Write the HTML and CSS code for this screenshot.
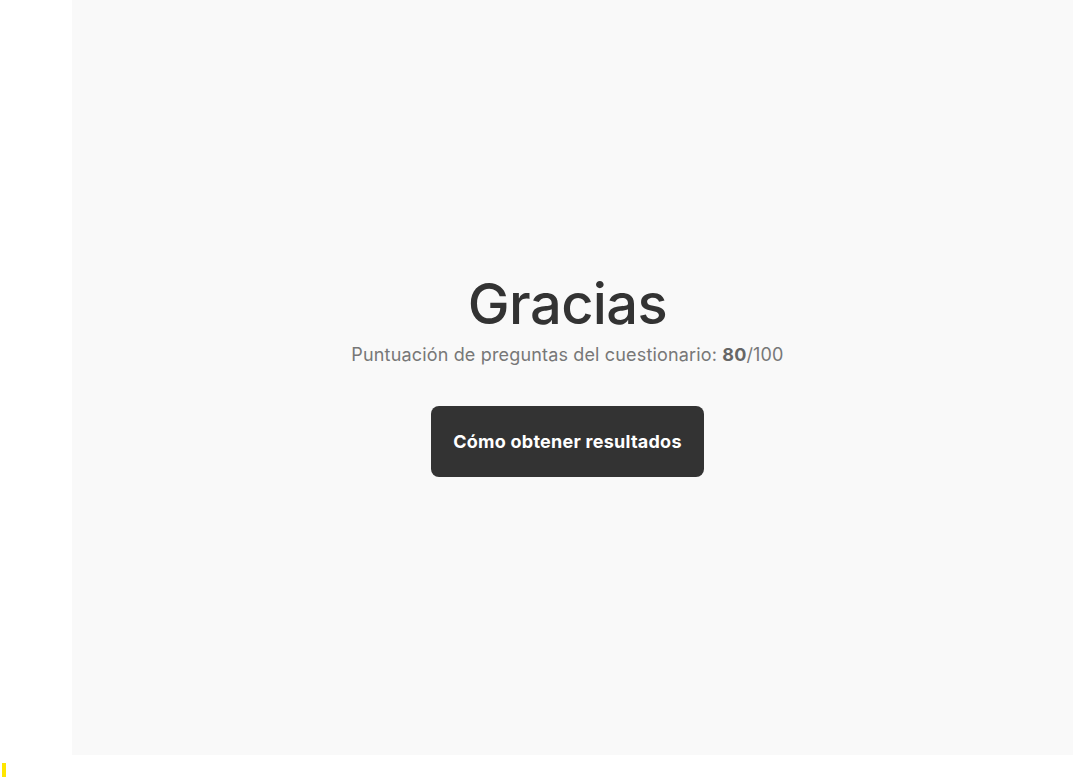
FILE: index.html
```html
<!DOCTYPE html>
<html lang="es">
<head>
<meta charset="utf-8">
<title>Gracias</title>
<link rel="stylesheet" href="styles.css">
</head>
<body>
<div class="layout">
  <aside class="side"></aside>
  <main class="panel">
    <div class="content">
      <h1 class="title">Gracias</h1>
      <p class="score">Puntuación de preguntas del cuestionario: <b>80</b>/100</p>
      <button class="btn">Cómo obtener resultados</button>
    </div>
  </main>
</div>
<div class="footer"><span class="marker"></span></div>
</body>
</html>
```
FILE: styles.css
```css
* { box-sizing: border-box; }
html, body { margin: 0; padding: 0; background: #fff; }
body { font-family: Inter, "Noto Sans", sans-serif; width: 1073px; height: 779px; overflow: hidden; }
.layout { display: flex; height: 755px; }
.side { width: 72px; flex: none; }
.panel { flex: 1; background: #f9f9f9; display: flex; align-items: center; justify-content: center; padding-right: 10px; }
.content { display: flex; flex-direction: column; align-items: center; margin-top: -6px; }
.title { margin: 0; font-size: 56px; font-weight: 500; color: #333; line-height: 64px; letter-spacing: -0.6px; }
.score { margin: 7px 0 0; font-size: 18px; color: #777; line-height: 24px; letter-spacing: 0.16px; }
.score b { font-weight: 700; color: #666; }
.btn { margin-top: 39px; width: 273px; height: 71px; background: #333; color: #fff; border: none; border-radius: 8px; font-family: inherit; font-size: 18px; font-weight: 700; letter-spacing: 0.25px; }
.footer { height: 24px; position: relative; }
.marker { position: absolute; left: 2px; top: 8px; width: 4px; height: 14px; background: #ffe600; }
```
